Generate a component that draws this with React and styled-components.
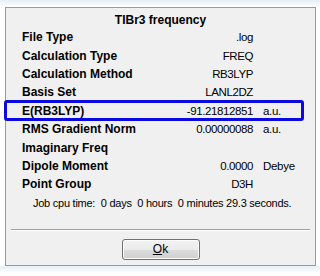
import styled, { createGlobalStyle } from 'styled-components'

const GlobalStyle = createGlobalStyle`
  body {
    margin: 0;
    background: linear-gradient(#e6eef6 0px, #ffffff 7px);
    font-family: "Liberation Sans", Arial, sans-serif;
  }
`

const rows = [
  { label: 'File Type', value: '.log' },
  { label: 'Calculation Type', value: 'FREQ' },
  { label: 'Calculation Method', value: 'RB3LYP' },
  { label: 'Basis Set', value: 'LANL2DZ' },
  { label: 'E(RB3LYP)', value: '-91.21812851', unit: 'a.u.', highlight: true },
  { label: 'RMS Gradient Norm', value: '0.00000088', unit: 'a.u.' },
  { label: 'Imaginary Freq', value: '' },
  { label: 'Dipole Moment', value: '0.0000', unit: 'Debye' },
  { label: 'Point Group', value: 'D3H' },
]

const Panel = styled.div`
  position: relative;
  box-sizing: border-box;
  margin: 7px 0 0 5px;
  width: 311px;
  height: 259px;
  background: #f0f0f0;
  border: 1px solid #9a9a9a;
  display: flex;
  flex-direction: column;
  font-family: "Liberation Sans", Arial, sans-serif;
  font-size: 12px;
  color: #000;
`

const Title = styled.div`
  text-align: center;
  font-weight: bold;
  padding-top: 3px;
  height: 17px;
  line-height: 19px;
`

const List = styled.div`
  display: flex;
  flex-direction: column;
  padding-left: 16px;
`

const Row = styled.div`
  position: relative;
  display: grid;
  grid-template-columns: 1fr 100px 52px;
  align-items: center;
  height: 18.4px;

  &::after {
    content: '';
    display: ${(p) => (p.$highlight ? 'block' : 'none')};
    position: absolute;
    left: -18px;
    right: 11px;
    top: -2px;
    bottom: -1px;
    border: 3px solid #0a0ae0;
    border-radius: 3px;
  }
`

const Label = styled.span`
  font-weight: bold;
  white-space: nowrap;
`

const Value = styled.span`
  text-align: right;
  padding-right: 10px;
  white-space: nowrap;
  font-size: 11.5px;
  letter-spacing: -0.4px;
`

const Unit = styled.span`
  white-space: nowrap;
  font-size: 11.5px;
  letter-spacing: -0.3px;
`

const CpuTime = styled.div`
  padding-left: 27px;
  height: 18px;
  line-height: 18px;
  white-space: pre;
  font-size: 11px;
  letter-spacing: -0.25px;
`

const Separator = styled.div`
  margin: 17px 5px 0 5px;
  border-top: 1px solid #a0a0a0;
  border-bottom: 1px solid #ffffff;
`

const Footer = styled.div`
  display: flex;
  justify-content: center;
  padding-top: 8px;
`

const Button = styled.button`
  width: 78px;
  height: 21px;
  border: 1px solid #707070;
  border-radius: 3px;
  background: linear-gradient(#f2f2f2 0%, #ebebeb 50%, #dddddd 51%, #cfcfcf 100%);
  box-shadow: inset 0 0 0 1px #fcfcfc;
  font-family: "Liberation Sans", Arial, sans-serif;
  font-size: 12px;
  color: #000;
  padding: 0;

  u {
    text-decoration: underline;
  }
`

export default function App() {
  return (
    <>
      <GlobalStyle />
      <Panel>
        <Title>TIBr3 frequency</Title>
        <List>
          {rows.map((r) => (
            <Row key={r.label} $highlight={r.highlight}>
              <Label>{r.label}</Label>
              <Value>{r.value}</Value>
              <Unit>{r.unit}</Unit>
            </Row>
          ))}
        </List>
        <CpuTime>{'Job cpu time:  0 days  0 hours  0 minutes 29.3 seconds.'}</CpuTime>
        <Separator />
        <Footer>
          <Button>
            <u>O</u>k
          </Button>
        </Footer>
      </Panel>
    </>
  )
}
